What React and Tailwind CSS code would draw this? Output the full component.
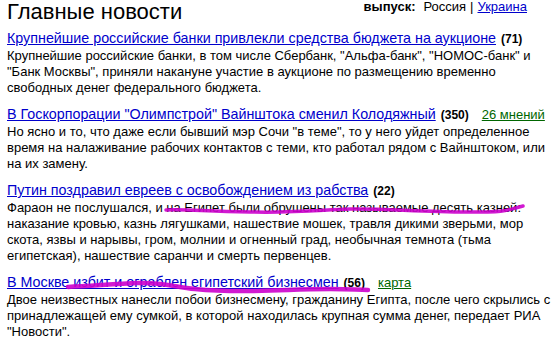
import React from 'react';

const news = [
  {
    title: 'Крупнейшие российские банки привлекли средства бюджета на аукционе',
    count: 71,
    lines: [
      'Крупнейшие российские банки, в том числе Сбербанк, "Альфа-банк", "НОМОС-банк" и',
      '"Банк Москвы", приняли накануне участие в аукционе по размещению временно',
      'свободных денег федерального бюджета.',
    ],
  },
  {
    title: 'В Госкорпорации "Олимпстрой" Вайнштока сменил Колодяжный',
    count: 350,
    extra: '26 мнений',
    lines: [
      'Но ясно и то, что даже если бывший мэр Сочи "в теме", то у него уйдет определенное',
      'время на налаживание рабочих контактов с теми, кто работал рядом с Вайнштоком, или',
      'на их замену.',
    ],
  },
  {
    title: 'Путин поздравил евреев с освобождением из рабства',
    count: 22,
    lines: [
      'Фараон не послушался, и на Египет были обрушены так называемые десять казней:',
      'наказание кровью, казнь лягушками, нашествие мошек, травля дикими зверьми, мор',
      'скота, язвы и нарывы, гром, молнии и огненный град, необычная темнота (тьма',
      'египетская), нашествие саранчи и смерть первенцев.',
    ],
  },
  {
    title: 'В Москве избит и ограблен египетский бизнесмен',
    count: 56,
    extra: 'карта',
    lines: [
      'Двое неизвестных нанесли побои бизнесмену, гражданину Египта, после чего скрылись с',
      'принадлежащей ему сумкой, в которой находилась крупная сумма денег, передает РИА',
      '"Новости".',
    ],
  },
];

const NewsItem = ({ item, first }) => (
  <div className={first ? 'mt-[5px]' : 'mt-[9px]'}>
    <div className="leading-[18px] whitespace-nowrap">
      <a href="#" className="text-[14.3px] text-[#0000cc] underline">{item.title}</a>
      <b className="ml-[5px] text-[12px]">({item.count})</b>
      {item.extra && (
        <a href="#" className="ml-[13px] text-[#006600] underline">{item.extra}</a>
      )}
    </div>
    <div className="leading-[16px] whitespace-nowrap">
      {item.lines.map((line, i) => (
        <div key={i}>{line}</div>
      ))}
    </div>
  </div>
);

export default function App() {
  return (
    <div
      className="relative w-[553px] h-[342px] overflow-hidden bg-white text-black text-[13px] px-[7px]"
      style={{ fontFamily: '"Liberation Sans", Arial, sans-serif' }}
    >
      {/* header */}
      <div className="flex items-start">
        <h1 className="text-[22px] leading-[24px] font-normal">Главные новости</h1>
        <div className="ml-auto mr-[19px] leading-[13px] whitespace-nowrap">
          <b>выпуск:</b>
          <span className="ml-[8px]">Россия</span>
          <span className="mx-[4px]">|</span>
          <a href="#" className="text-[#0000cc] underline">Украина</a>
        </div>
      </div>

      {news.map((item, i) => (
        <NewsItem key={i} item={item} first={i === 0} />
      ))}

      {/* marker scribbles */}
      <svg className="absolute inset-0 pointer-events-none" width="553" height="342">
        <path
          d="M166 210 C 185 209, 200 211, 250 212 S 320 210, 350 209 S 420 212, 467 212 S 505 210, 523 206"
          fill="none"
          stroke="#cc00cc"
          strokeWidth="3.5"
          strokeLinecap="round"
          opacity="0.9"
        />
        <path
          d="M68 287 C 90 286, 115 284, 138 283 S 175 287, 195 289 S 240 292, 288 290 S 340 289, 368 290"
          fill="none"
          stroke="#cc00cc"
          strokeWidth="4.5"
          strokeLinecap="round"
          opacity="0.9"
        />
      </svg>
    </div>
  );
}
